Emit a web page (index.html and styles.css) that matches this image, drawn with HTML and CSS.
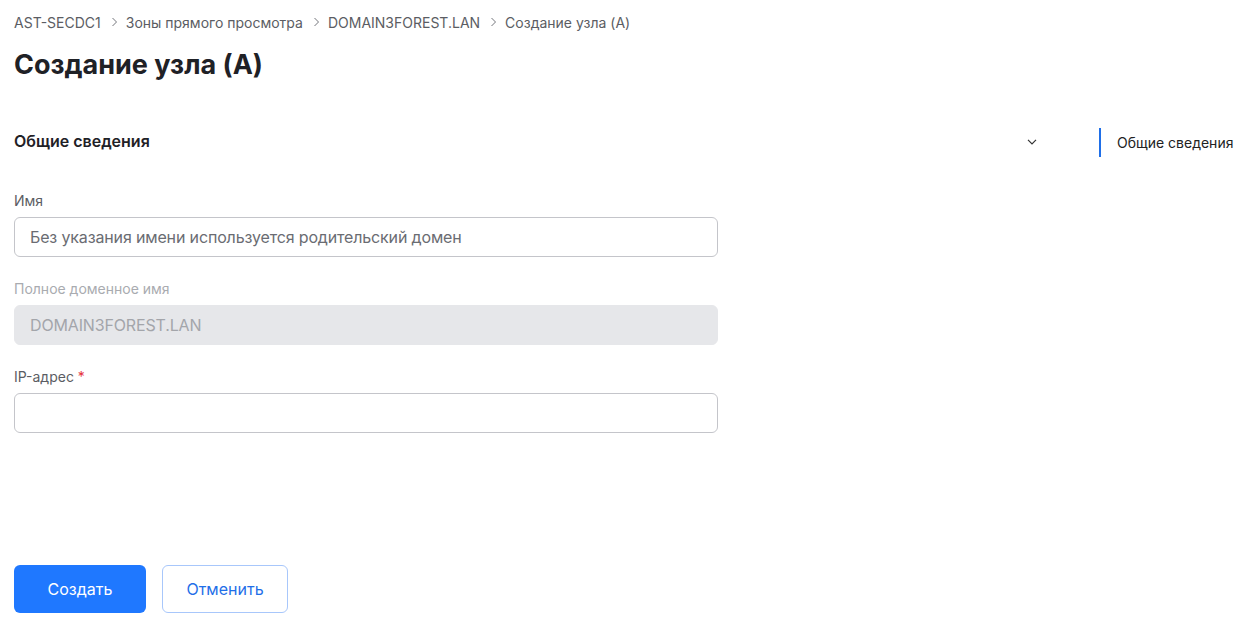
FILE: index.html
```html
<!DOCTYPE html>
<html lang="ru">
  <head>
    <meta charset="UTF-8" />
    <meta name="viewport" content="width=device-width, initial-scale=1.0" />
    <title>Создание узла (A)</title>
    <link rel="stylesheet" href="styles.css">
  </head>
  <body>
    <div class="page">
      <div class="main">
        <nav class="breadcrumbs">
          <span class="crumb">AST-SECDC1</span>
          <svg class="sep" width="7" height="10" viewBox="0 0 7 10">
            <path d="M1.5 1 L5.5 5 L1.5 9" fill="none" stroke="#74767c" stroke-width="1" />
          </svg>
          <span class="crumb">Зоны прямого просмотра</span>
          <svg class="sep" width="7" height="10" viewBox="0 0 7 10">
            <path d="M1.5 1 L5.5 5 L1.5 9" fill="none" stroke="#74767c" stroke-width="1" />
          </svg>
          <span class="crumb">DOMAIN3FOREST.LAN</span>
          <svg class="sep" width="7" height="10" viewBox="0 0 7 10">
            <path d="M1.5 1 L5.5 5 L1.5 9" fill="none" stroke="#74767c" stroke-width="1" />
          </svg>
          <span class="crumb">Создание узла (A)</span>
        </nav>
        <h1>Создание узла (A)</h1>

        <div class="section">
          <div class="section-header">
            <span class="section-title">Общие сведения</span>
            <svg class="chevron" width="10" height="6" viewBox="0 0 10 6">
              <path d="M1 0.8 L5 4.8 L9 0.8" fill="none" stroke="#333" stroke-width="1.2" />
            </svg>
          </div>

          <div class="field">
            <label for="name">Имя</label>
            <input type="text" id="name" placeholder="Без указания имени используется родительский домен" />
          </div>

          <div class="field">
            <label for="fqdn" class="disabled-label">Полное доменное имя</label>
            <input type="text" id="fqdn" value="DOMAIN3FOREST.LAN" disabled />
          </div>

          <div class="field">
            <label for="ip">IP-адрес <span class="required">*</span></label>
            <input type="text" id="ip" />
          </div>
        </div>

        <div class="actions">
          <button class="btn btn-primary">Создать</button>
          <button class="btn btn-secondary">Отменить</button>
        </div>
      </div>

      <aside class="side-nav">
        <div class="side-item">Общие сведения</div>
      </aside>
    </div>
  </body>
</html>
```

FILE: styles.css
```css
body {
  margin: 0;
  padding: 0;
  font-family: Inter, "Noto Sans", sans-serif;
  background-color: #fff;
  color: #1f2126;
}

.page {
  display: flex;
  padding: 0 0 0 14px;
}

.main {
  width: 1029px;
  display: flex;
  flex-direction: column;
}

.breadcrumbs {
  display: flex;
  align-items: center;
  font-size: 14px;
  color: #5b5d63;
  height: 20px;
  margin-top: 12px;
}

.sep {
  margin: 0 8px 0 10px;
}

h1 {
  font-size: 27px;
  font-weight: 700;
  margin: 17px 0 0 0;
  line-height: 32px;
}

.section {
  margin-top: 49px;
}

.section-header {
  display: flex;
  justify-content: space-between;
  align-items: center;
  height: 22px;
  margin-bottom: 39px;
}

.section-title {
  font-size: 16px;
  font-weight: 600;
}

.chevron {
  margin-right: 6px;
  margin-top: 1px;
}

.field {
  width: 704px;
  margin-bottom: 22px;
}

label {
  display: block;
  font-size: 14px;
  line-height: 20px;
  color: #5b5d63;
  margin-bottom: 6px;
}

.disabled-label {
  color: #a9abb0;
}

.required {
  color: #e5343d;
}

input[type="text"] {
  box-sizing: border-box;
  width: 100%;
  height: 40px;
  padding: 0 15px;
  border: 1px solid #c4c5ca;
  border-radius: 6px;
  font-family: inherit;
  font-size: 16px;
  letter-spacing: -0.15px;
  color: #1f2126;
  background: #fff;
}

input[type="text"]::placeholder {
  color: #6a6c72;
}

input[type="text"]:disabled {
  border-color: #e6e7ea;
  background-color: #e6e7ea;
  color: #a3a5aa;
}

.actions {
  display: flex;
  gap: 16px;
  margin-top: 110px;
}

.btn {
  height: 48px;
  border-radius: 6px;
  font-family: inherit;
  font-size: 16px;
  cursor: pointer;
}

.btn-primary {
  width: 132px;
  border: none;
  background-color: #1f78ff;
  color: #fff;
}

.btn-secondary {
  width: 126px;
  border: 1px solid #a8c7fb;
  background-color: #fff;
  color: #1f6fe8;
}

.side-nav {
  margin-top: 128px;
  margin-left: 56px;
}

.side-item {
  border-left: 2px solid #1f6fe8;
  padding-left: 16px;
  height: 29px;
  line-height: 29px;
  font-size: 14px;
  color: #222;
}
```
